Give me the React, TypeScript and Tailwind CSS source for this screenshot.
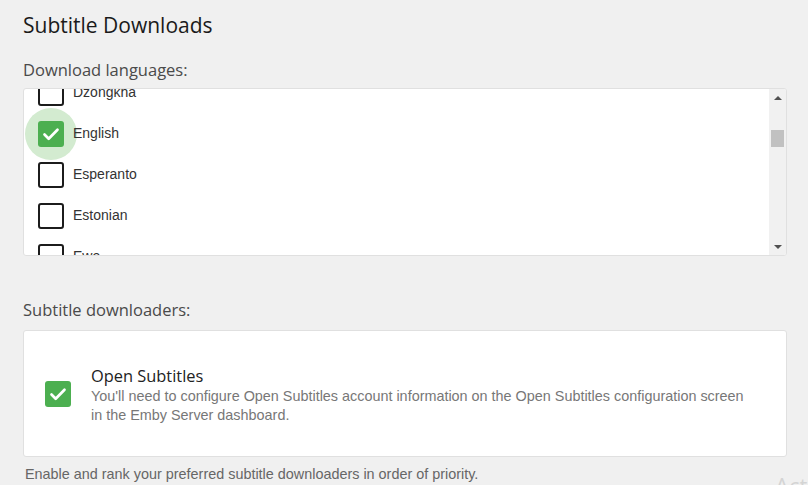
import { useEffect, useRef } from 'react';

const languages = [
	'Danish',
	'Divehi',
	'Dutch',
	'Dzongkha',
	'English',
	'Esperanto',
	'Estonian',
	'Ewe',
	'Faroese',
	'Fijian',
	'Finnish',
	'French',
	'Fulah',
];

function CheckIcon() {
	return (
		<svg width={26} height={26} viewBox="0 0 26 26" fill="none">
			<path
				d="M6.5 13.5l4.2 4.2 8.8-9"
				stroke="white"
				strokeWidth="2.7"
				strokeLinecap="round"
				strokeLinejoin="round"
			/>
		</svg>
	);
}

function LangRow({ name, checked }: { name: string; checked: boolean }) {
	return (
		<div className="flex items-center h-[41px] pl-[14px] gap-[9px]">
			<div className="relative w-[26px] h-[26px] shrink-0">
				{checked && (
					<div className="absolute left-[-13px] top-[-13px] w-[52px] h-[52px] rounded-full bg-[#d3ebd0]" />
				)}
				{checked ? (
					<div className="relative w-[26px] h-[26px] rounded-[3px] bg-[#4caf50]">
						<CheckIcon />
					</div>
				) : (
					<div className="w-[26px] h-[26px] rounded-[3px] border-2 border-[#1c1c1c] bg-white" />
				)}
			</div>
			<span className="relative text-[14px] text-[#333]">{name}</span>
		</div>
	);
}

export default function App() {
	//SCROLLED LIST
	const listRef = useRef<HTMLDivElement>(null);
	useEffect(() => {
		if (listRef.current) listRef.current.scrollTop = 140;
	}, []);

	return (
		<div
			className="relative w-full h-[485px] overflow-hidden bg-[#f0f0f0] pl-[23px] pr-[21px]"
			style={{ fontFamily: '"Liberation Sans", Arial, sans-serif' }}
		>
			<h1
				className="text-[21px] font-medium text-[#1a1a1a] pt-[10px] leading-[30px]"
				style={{ fontFamily: '"Open Sans", "Noto Sans", sans-serif' }}
			>
				Subtitle Downloads
			</h1>

			<h2
				className="mt-[19px] text-[16.5px] font-medium text-[#4a4a4a] leading-[22px]"
				style={{ fontFamily: '"Open Sans", "Noto Sans", sans-serif' }}
			>
				Download languages:
			</h2>

			<div className="mt-[7px] h-[168px] flex bg-white border border-[#e0e0e0] rounded-[3px] overflow-hidden">
				<div ref={listRef} className="flex-1 overflow-hidden">
					{languages.map(l => (
						<LangRow key={l} name={l} checked={l === 'English'} />
					))}
				</div>
				<div className="w-[17px] bg-[#f1f1f1] flex flex-col items-center">
					<div className="h-[17px] flex items-center justify-center">
						<div className="w-0 h-0 border-l-[4px] border-r-[4px] border-b-[4px] border-l-transparent border-r-transparent border-b-[#505050]" />
					</div>
					<div className="mt-[24px] w-[13px] h-[17px] bg-[#c1c1c1]" />
					<div className="flex-1" />
					<div className="h-[17px] flex items-center justify-center">
						<div className="w-0 h-0 border-l-[4px] border-r-[4px] border-t-[4px] border-l-transparent border-r-transparent border-t-[#505050]" />
					</div>
				</div>
			</div>

			<h2
				className="mt-[43px] text-[16.5px] font-medium text-[#4a4a4a] leading-[22px]"
				style={{ fontFamily: '"Open Sans", "Noto Sans", sans-serif' }}
			>
				Subtitle downloaders:
			</h2>

			<div className="mt-[9px] h-[127px] flex items-center bg-white border border-[#e0e0e0] rounded-[3px] pl-[21px] pr-4 gap-[20px]">
				<div className="w-[26px] h-[26px] rounded-[3px] bg-[#4caf50] shrink-0">
					<CheckIcon />
				</div>
				<div className="pt-[2px]">
					<div
						className="text-[16.4px] font-medium text-[#222] leading-[22px]"
						style={{ fontFamily: '"Open Sans", "Noto Sans", sans-serif' }}
					>
						Open Subtitles
					</div>
					<div className="text-[14.4px] text-[#777] leading-[19px]">
						You'll need to configure Open Subtitles account information on the Open Subtitles configuration screen
						<br />
						in the Emby Server dashboard.
					</div>
				</div>
			</div>

			<p className="mt-[7px] ml-[2px] text-[14.4px] text-[#666] leading-[20px]">
				Enable and rank your preferred subtitle downloaders in order of priority.
			</p>

			<div
				className="absolute left-[775px] top-[469px] text-[22px] text-[#d4d4d4] whitespace-nowrap"
				style={{ fontFamily: '"Open Sans", "Noto Sans", sans-serif' }}
			>
				Activate Windows
			</div>
		</div>
	);
}
